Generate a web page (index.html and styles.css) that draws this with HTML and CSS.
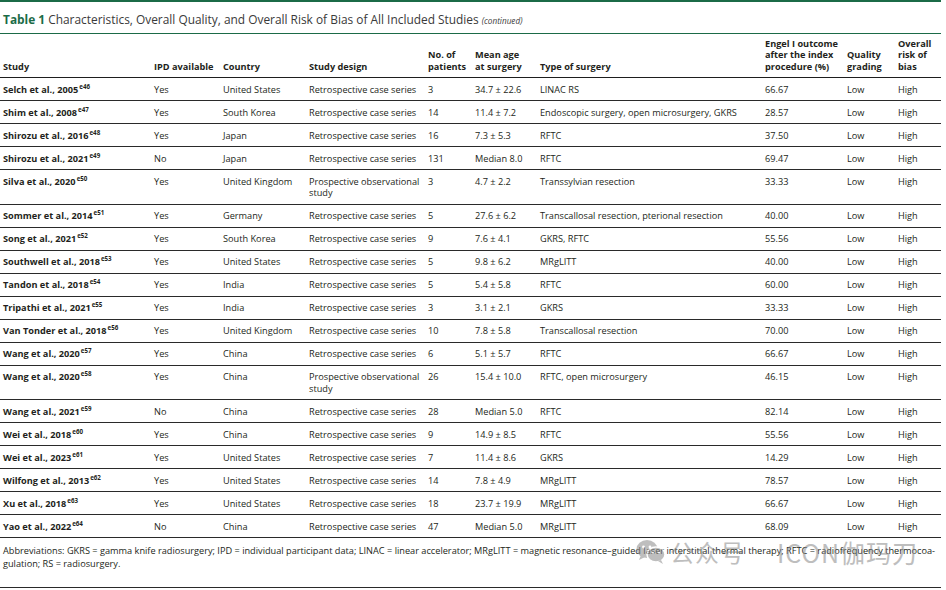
FILE: index.html
```html
<!DOCTYPE html>
<html lang="en">
<head>
<meta charset="utf-8">
<title>Table 1</title>
<link rel="stylesheet" href="styles.css">
</head>
<body>
<div class="page">
  <div class="topbar"></div>
  <div class="title"><span class="tlabel">Table 1</span> Characteristics, Overall Quality, and Overall Risk of Bias of All Included Studies <span class="cont">(continued)</span></div>
  <table class="data">
    <colgroup>
      <col class="c1"><col class="c2"><col class="c3"><col class="c4"><col class="c5"><col class="c6"><col class="c7"><col class="c8"><col class="c9"><col class="c10">
    </colgroup>
    <thead>
      <tr>
        <th>Study</th>
        <th>IPD available</th>
        <th>Country</th>
        <th>Study design</th>
        <th>No. of<br>patients</th>
        <th>Mean age<br>at surgery</th>
        <th>Type of surgery</th>
        <th>Engel I outcome<br>after the index<br>procedure (%)</th>
        <th>Quality<br>grading</th>
        <th>Overall<br>risk of<br>bias</th>
      </tr>
    </thead>
    <tbody>
      <tr><td class="st">Selch et al., 2005<sup>e46</sup></td><td>Yes</td><td>United States</td><td>Retrospective case series</td><td>3</td><td>34.7 ± 22.6</td><td>LINAC RS</td><td>66.67</td><td>Low</td><td>High</td></tr>
      <tr><td class="st">Shim et al., 2008<sup>e47</sup></td><td>Yes</td><td>South Korea</td><td>Retrospective case series</td><td>14</td><td>11.4 ± 7.2</td><td>Endoscopic surgery, open microsurgery, GKRS</td><td>28.57</td><td>Low</td><td>High</td></tr>
      <tr><td class="st">Shirozu et al., 2016<sup>e48</sup></td><td>Yes</td><td>Japan</td><td>Retrospective case series</td><td>16</td><td>7.3 ± 5.3</td><td>RFTC</td><td>37.50</td><td>Low</td><td>High</td></tr>
      <tr><td class="st">Shirozu et al., 2021<sup>e49</sup></td><td>No</td><td>Japan</td><td>Retrospective case series</td><td>131</td><td>Median 8.0</td><td>RFTC</td><td>69.47</td><td>Low</td><td>High</td></tr>
      <tr><td class="st">Silva et al., 2020<sup>e50</sup></td><td>Yes</td><td>United Kingdom</td><td>Prospective observational<br>study</td><td>3</td><td>4.7 ± 2.2</td><td>Transsylvian resection</td><td>33.33</td><td>Low</td><td>High</td></tr>
      <tr><td class="st">Sommer et al., 2014<sup>e51</sup></td><td>Yes</td><td>Germany</td><td>Retrospective case series</td><td>5</td><td>27.6 ± 6.2</td><td>Transcallosal resection, pterional resection</td><td>40.00</td><td>Low</td><td>High</td></tr>
      <tr><td class="st">Song et al., 2021<sup>e52</sup></td><td>Yes</td><td>South Korea</td><td>Retrospective case series</td><td>9</td><td>7.6 ± 4.1</td><td>GKRS, RFTC</td><td>55.56</td><td>Low</td><td>High</td></tr>
      <tr><td class="st">Southwell et al., 2018<sup>e53</sup></td><td>Yes</td><td>United States</td><td>Retrospective case series</td><td>5</td><td>9.8 ± 6.2</td><td>MRgLITT</td><td>40.00</td><td>Low</td><td>High</td></tr>
      <tr><td class="st">Tandon et al., 2018<sup>e54</sup></td><td>Yes</td><td>India</td><td>Retrospective case series</td><td>5</td><td>5.4 ± 5.8</td><td>RFTC</td><td>60.00</td><td>Low</td><td>High</td></tr>
      <tr><td class="st">Tripathi et al., 2021<sup>e55</sup></td><td>Yes</td><td>India</td><td>Retrospective case series</td><td>3</td><td>3.1 ± 2.1</td><td>GKRS</td><td>33.33</td><td>Low</td><td>High</td></tr>
      <tr><td class="st">Van Tonder et al., 2018<sup>e56</sup></td><td>Yes</td><td>United Kingdom</td><td>Retrospective case series</td><td>10</td><td>7.8 ± 5.8</td><td>Transcallosal resection</td><td>70.00</td><td>Low</td><td>High</td></tr>
      <tr><td class="st">Wang et al., 2020<sup>e57</sup></td><td>Yes</td><td>China</td><td>Retrospective case series</td><td>6</td><td>5.1 ± 5.7</td><td>RFTC</td><td>66.67</td><td>Low</td><td>High</td></tr>
      <tr><td class="st">Wang et al., 2020<sup>e58</sup></td><td>Yes</td><td>China</td><td>Prospective observational<br>study</td><td>26</td><td>15.4 ± 10.0</td><td>RFTC, open microsurgery</td><td>46.15</td><td>Low</td><td>High</td></tr>
      <tr><td class="st">Wang et al., 2021<sup>e59</sup></td><td>No</td><td>China</td><td>Retrospective case series</td><td>28</td><td>Median 5.0</td><td>RFTC</td><td>82.14</td><td>Low</td><td>High</td></tr>
      <tr><td class="st">Wei et al., 2018<sup>e60</sup></td><td>Yes</td><td>China</td><td>Retrospective case series</td><td>9</td><td>14.9 ± 8.5</td><td>RFTC</td><td>55.56</td><td>Low</td><td>High</td></tr>
      <tr><td class="st">Wei et al., 2023<sup>e61</sup></td><td>Yes</td><td>United States</td><td>Retrospective case series</td><td>7</td><td>11.4 ± 8.6</td><td>GKRS</td><td>14.29</td><td>Low</td><td>High</td></tr>
      <tr><td class="st">Wilfong et al., 2013<sup>e62</sup></td><td>Yes</td><td>United States</td><td>Retrospective case series</td><td>14</td><td>7.8 ± 4.9</td><td>MRgLITT</td><td>78.57</td><td>Low</td><td>High</td></tr>
      <tr><td class="st">Xu et al., 2018<sup>e63</sup></td><td>Yes</td><td>United States</td><td>Retrospective case series</td><td>18</td><td>23.7 ± 19.9</td><td>MRgLITT</td><td>66.67</td><td>Low</td><td>High</td></tr>
      <tr><td class="st">Yao et al., 2022<sup>e64</sup></td><td>No</td><td>China</td><td>Retrospective case series</td><td>47</td><td>Median 5.0</td><td>MRgLITT</td><td>68.09</td><td>Low</td><td>High</td></tr>
    </tbody>
  </table>
  <div class="abbrev">Abbreviations: GKRS = gamma knife radiosurgery; IPD = individual participant data; LINAC = linear accelerator; MRgLITT = magnetic resonance–guided laser interstitial thermal therapy; RFTC = radiofrequency thermocoa-<br>gulation; RS = radiosurgery.</div>
</div>
<div class="watermark">
  <svg class="wm-icon" width="30" height="26" viewBox="0 0 30 26">
    <ellipse cx="11" cy="10" rx="10.5" ry="9" fill="#8a8a8a"/>
    <path d="M5 16 L3 21 L9 18 Z" fill="#8a8a8a"/>
    <ellipse cx="20" cy="15.5" rx="9" ry="7.5" fill="#8a8a8a" stroke="#fff" stroke-width="1.5"/>
    <path d="M25 21 L27 25 L22 22 Z" fill="#8a8a8a"/>
    <circle cx="7.5" cy="8" r="1.4" fill="#fff"/>
    <circle cx="14" cy="8" r="1.4" fill="#fff"/>
    <circle cx="17" cy="14" r="1.1" fill="#fff"/>
    <circle cx="23" cy="14" r="1.1" fill="#fff"/>
  </svg>
  <span class="wm-text">公众号</span>
  <span class="wm-text wm-name">ICON伽玛刀</span>
</div>
</body>
</html>
```
FILE: styles.css
```css
html, body {
  margin: 0;
  padding: 0;
  background: #ffffff;
}
body {
  font-family: "Open Sans", "Noto Sans", sans-serif;
  color: #231f20;
}
.page {
  width: 941px;
  position: relative;
}
.topbar {
  height: 2px;
  background: #1b6b47;
}
.title {
  margin-top: 10px;
  padding: 0 0 5px 3px;
  font-size: 11.9px;
  line-height: 15px;
  color: #3a3a3a;
  border-bottom: 1px solid #1b6b47;
}
.tlabel {
  font-weight: 700;
  color: #1b6b47;
}
.cont {
  font-style: italic;
  font-size: 8.2px;
}
.data {
  width: 941px;
  table-layout: fixed;
  border-collapse: collapse;
  font-size: 9.2px;
}
.c1 { width: 151px; }
.c2 { width: 69px; }
.c3 { width: 86px; }
.c4 { width: 119px; }
.c5 { width: 47px; }
.c6 { width: 65px; }
.c7 { width: 225px; }
.c8 { width: 82px; }
.c9 { width: 51px; }
.c10 { width: 46px; }
.data th {
  text-align: left;
  vertical-align: bottom;
  font-weight: 700;
  line-height: 11.5px;
  padding: 3.5px 3px 5px 3px;
  border-bottom: 1px solid #1e1e1e;
  white-space: nowrap;
}
.data td {
  text-align: left;
  vertical-align: top;
  line-height: 11.5px;
  padding: 5.5px 3px 5px 3px;
  border-bottom: 1px solid #2a2a2a;
  white-space: nowrap;
  color: #231f20;
}
.data td.st {
  font-weight: 700;
}
.data sup {
  font-size: 6.2px;
  line-height: 0;
  vertical-align: 4px;
  margin-left: 1px;
}
.abbrev {
  padding: 6px 3px 17px 3px;
  font-size: 9.2px;
  line-height: 13px;
  white-space: nowrap;
  border-bottom: 1px solid #2a2a2a;
}
.watermark {
  position: absolute;
  left: 636px;
  top: 539px;
  display: flex;
  align-items: center;
  gap: 4px;
  opacity: 0.55;
  pointer-events: none;
}
.wm-text {
  font-family: "Noto Sans CJK SC", "Noto Sans", sans-serif;
  font-size: 24px;
  line-height: 26px;
  color: #8a8a8a;
  letter-spacing: 1px;
}
.wm-name {
  margin-left: 28px;
  font-size: 25px;
}
```
